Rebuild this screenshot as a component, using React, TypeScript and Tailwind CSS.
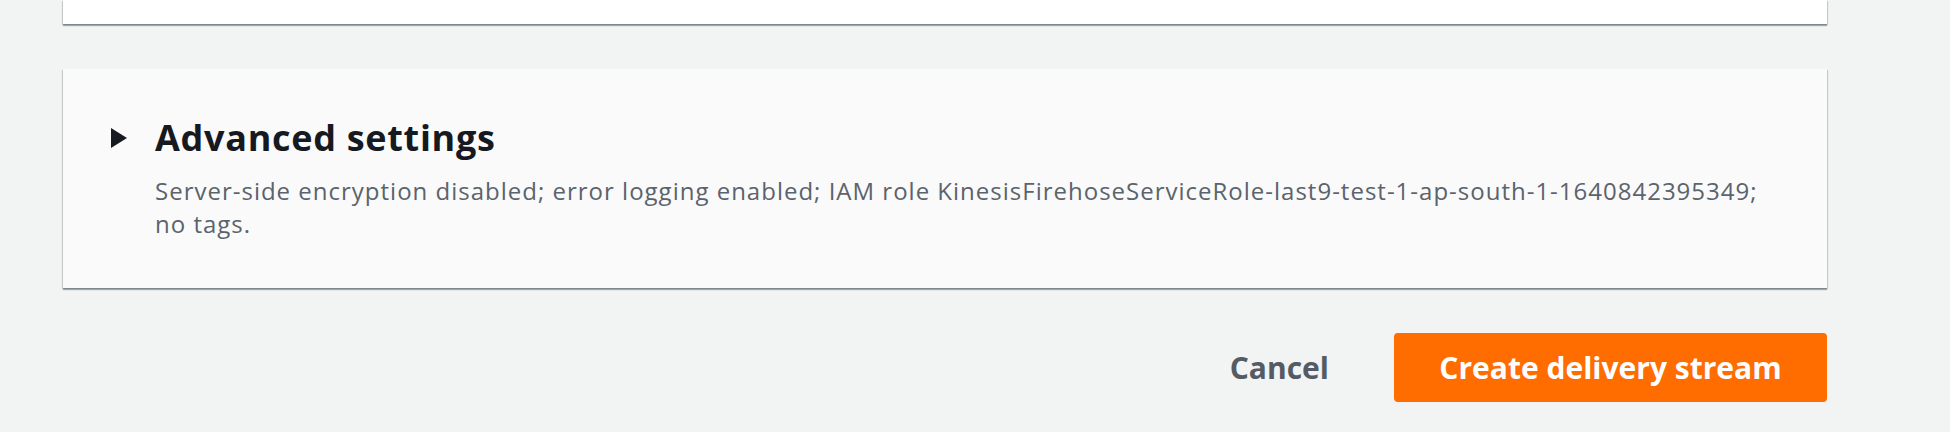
import { useState } from "react"

function Caret({ open }: { open: boolean }) {
  return (
    <svg width="16" height="20" viewBox="0 0 16 20" className={open ? "rotate-90" : ""}>
      <polygon points="0,0 16,10 0,20" fill="#16191f" />
    </svg>
  )
}

export default function App() {
  const [open, setOpen] = useState(false)

  return (
    <div className="min-h-[432px] bg-[#f2f3f3] pl-[63px] pr-[123px] font-['Open_Sans',sans-serif]">
      <div className="h-[24px] bg-white shadow-[0_2px_1px_0_rgba(0,28,36,0.3),1px_1px_1px_0_rgba(0,28,36,0.15),-1px_1px_1px_0_rgba(0,28,36,0.15)]" />

      <section className="mt-[45px] bg-[#fafafa] px-[48px] pt-[47px] pb-[48px] shadow-[0_2px_1px_0_rgba(0,28,36,0.3),1px_1px_1px_0_rgba(0,28,36,0.15),-1px_1px_1px_0_rgba(0,28,36,0.15)]">
        <button onClick={() => setOpen(!open)} className="flex items-center gap-[28px] text-left">
          <Caret open={open} />
          <h2 className="text-[36px] leading-[44px] font-bold tracking-[0.7px] text-[#16191f]">Advanced settings</h2>
        </button>
        <p className="mt-[14px] pl-[44px] text-[24px] leading-[33px] tracking-[1px] text-[#5b636c]">
          Server-side encryption disabled; error logging enabled; IAM role KinesisFirehoseServiceRole-last9-test-1-ap-south-1-1640842395349; no tags.
        </p>
      </section>

      <div className="mt-[45px] flex items-center justify-end gap-[33px]">
        <button className="h-[69px] px-[32px] text-[30px] font-bold text-[#545b64]">Cancel</button>
        <button className="h-[69px] w-[433px] rounded-[4px] bg-[#ff6c00] text-[30px] font-bold text-white">
          Create delivery stream
        </button>
      </div>
    </div>
  )
}
